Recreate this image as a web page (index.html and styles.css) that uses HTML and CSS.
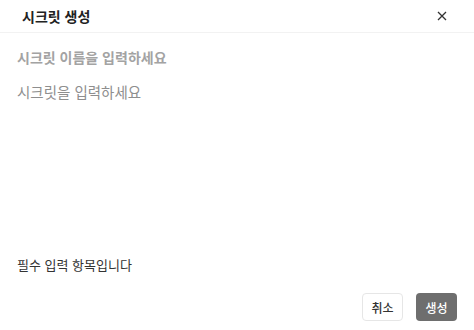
FILE: index.html
```html
<!DOCTYPE html>
<html lang="ko">
<head>
  <meta charset="UTF-8" />
  <meta name="viewport" content="width=device-width, initial-scale=1.0"/>
  <title>시크릿 생성</title>
  <link rel="stylesheet" href="styles.css">
</head>
<body>
  <div class="modal">
    <!-- Header -->
    <div class="modal-header">
      <h2 class="modal-title">시크릿 생성</h2>
      <button class="close-btn" type="button" aria-label="닫기">
        <svg width="10" height="10" viewBox="0 0 10 10">
          <path d="M1 1 L9 9 M9 1 L1 9" stroke="#333" stroke-width="1.3" fill="none"/>
        </svg>
      </button>
    </div>

    <!-- Body -->
    <div class="modal-body">
      <input class="name-input" type="text" placeholder="시크릿 이름을 입력하세요" />
      <textarea class="secret-input" placeholder="시크릿을 입력하세요"></textarea>
      <p class="helper-text">필수 입력 항목입니다</p>
    </div>

    <!-- Footer -->
    <div class="modal-footer">
      <button class="btn btn-cancel" type="button">취소</button>
      <button class="btn btn-create" type="button">생성</button>
    </div>
  </div>
</body>
</html>
```

FILE: styles.css
```css
* {
  margin: 0;
  padding: 0;
  box-sizing: border-box;
  font-family: 'Noto Sans CJK KR', 'Noto Sans', sans-serif;
}

body {
  background-color: #fff;
  color: #333;
}

.modal {
  width: 474px;
  height: 330px;
  display: flex;
  flex-direction: column;
}

.modal-header {
  height: 33px;
  display: flex;
  justify-content: space-between;
  align-items: center;
  padding: 0 24px 0 22px;
  border-bottom: 1px solid #f2f2f2;
}

.modal-title {
  font-size: 14px;
  font-weight: bold;
  color: #222;
}

.close-btn {
  width: 16px;
  height: 16px;
  display: flex;
  align-items: center;
  justify-content: center;
  background: none;
  border: none;
  cursor: pointer;
}

.modal-body {
  flex: 1;
  display: flex;
  flex-direction: column;
  padding: 14px 17px 0;
}

.name-input,
.secret-input {
  border: none;
  outline: none;
  width: 100%;
  color: #333;
  background: transparent;
}

.name-input {
  height: 20px;
  font-size: 14px;
  font-weight: 600;
}

.name-input::placeholder {
  color: #a3a3a3;
}

.secret-input {
  margin-top: 15px;
  flex: 1;
  resize: none;
  font-size: 14.5px;
  line-height: 20px;
}

.secret-input::placeholder {
  color: #8e8e8e;
}

.helper-text {
  font-size: 13px;
  line-height: 18px;
  color: #333;
  margin: 6px 0 0;
}

.modal-footer {
  display: flex;
  justify-content: flex-end;
  gap: 13px;
  padding: 19px 17px 9px;
}

.btn {
  width: 41px;
  height: 28px;
  border-radius: 4px;
  font-size: 12px;
  font-weight: 500;
  cursor: pointer;
}

.btn-cancel {
  background-color: #fff;
  border: 1px solid #e6e6e6;
  color: #333;
}

.btn-create {
  background-color: #6e6e6e;
  border: none;
  color: #fff;
}
```
